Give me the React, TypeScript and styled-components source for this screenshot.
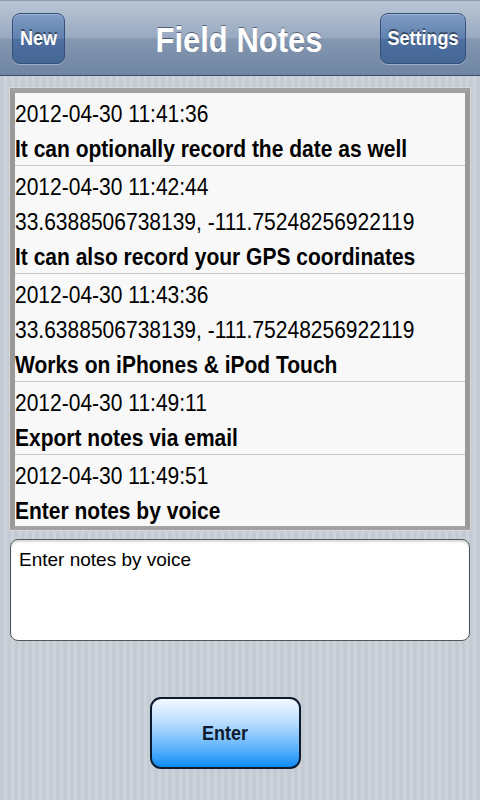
import styled, { createGlobalStyle } from 'styled-components';

const GlobalStyle = createGlobalStyle`
  html, body {
    margin: 0;
    padding: 0;
  }
  body {
    font-family: 'Liberation Sans', Arial, sans-serif;
  }
`;

interface Note {
  id: number;
  date: string;
  gps?: string;
  text: string;
}

const NOTES: Note[] = [
  { id: 1, date: '2012-04-30 11:41:36', text: 'It can optionally record the date as well' },
  {
    id: 2,
    date: '2012-04-30 11:42:44',
    gps: '33.6388506738139, -111.75248256922119',
    text: 'It can also record your GPS coordinates',
  },
  {
    id: 3,
    date: '2012-04-30 11:43:36',
    gps: '33.6388506738139, -111.75248256922119',
    text: 'Works on iPhones & iPod Touch',
  },
  { id: 4, date: '2012-04-30 11:49:11', text: 'Export notes via email' },
  { id: 5, date: '2012-04-30 11:49:51', text: 'Enter notes by voice' },
];

// the screenshot is stretched a little taller than wide
const STRETCH = 'scaleY(1.11)';

const Screen = styled.div`
  width: 480px;
  height: 800px;
  display: flex;
  flex-direction: column;
  overflow: hidden;
  background: repeating-linear-gradient(
    90deg,
    #c4cbd3 0px,
    #c4cbd3 4px,
    #ccd3da 4px,
    #ccd3da 7px
  );
`;

const NavBar = styled.header`
  height: 76px;
  flex-shrink: 0;
  box-sizing: border-box;
  display: grid;
  grid-template-columns: 1fr auto 1fr;
  align-items: center;
  padding: 0 14px 0 12px;
  border-top: 1px solid #8d9cb0;
  border-bottom: 1px solid #3e5069;
  background: linear-gradient(180deg, #bac6d5 0%, #98a9c0 50%, #8598b2 51%, #6f85a3 100%);
`;

const NavButton = styled.button<{ $width: number; $right?: boolean }>`
  width: ${p => p.$width}px;
  height: 51px;
  justify-self: ${p => (p.$right ? 'end' : 'start')};
  padding: 0;
  border: 1px solid #34507a;
  border-radius: 8px;
  background: linear-gradient(180deg, #7f9cc3 0%, #5f80ae 50%, #4e6f9f 51%, #456897 100%);
  box-shadow: inset 0 1px 0 rgba(255, 255, 255, 0.25), 0 1px 0 rgba(255, 255, 255, 0.3);
  color: #fff;
  font-family: 'Liberation Sans', Arial, sans-serif;
  font-weight: bold;
  font-size: 18px;
  text-shadow: 0 -1px 0 rgba(0, 0, 0, 0.45);
  span {
    display: inline-block;
    transform: ${STRETCH};
  }
`;

const Title = styled.h1`
  margin: 5px 0 0 0;
  color: #fff;
  font-size: 31px;
  font-weight: bold;
  text-shadow: 0 -1px 0 rgba(30, 45, 70, 0.6);
  transform: ${STRETCH};
`;

const Body = styled.main`
  flex: 1;
  display: flex;
  flex-direction: column;
  padding: 12px 10px 0 10px;
`;

const List = styled.div`
  height: 442px;
  flex-shrink: 0;
  box-sizing: border-box;
  border: 5px solid #a2a2a2;
  border-left-color: #9a9a9a;
  border-right-color: #9a9a9a;
  border-bottom-width: 4px;
  box-shadow: 0 0 0 1px #d8d8d8;
  background: #f7f7f7;
  overflow: hidden;
`;

const Row = styled.div`
  padding-top: 2px;
  border-bottom: 1px solid #c9c9c9;
  background: #f8f8f8;
  &:last-child {
    border-bottom: none;
  }
`;

const Line = styled.div<{ $bold?: boolean }>`
  height: 35px;
  line-height: 37px;
  color: #000;
  font-size: 21px;
  font-weight: ${p => (p.$bold ? 'bold' : 'normal')};
  white-space: nowrap;
  transform: ${STRETCH};
  transform-origin: left center;
`;

const NoteInput = styled.textarea`
  margin-top: 9px;
  height: 102px;
  flex-shrink: 0;
  box-sizing: border-box;
  padding: 9px 8px 7px;
  border: 1px solid #555;
  border-radius: 8px;
  background: #fff;
  box-shadow: inset 0 2px 2px rgba(0, 0, 0, 0.15);
  color: #000;
  font-family: 'Liberation Sans', Arial, sans-serif;
  font-size: 19px;
  resize: none;
  outline: none;
`;

const Footer = styled.div`
  display: flex;
  justify-content: center;
  padding: 56px 30px 0 0;
`;

const EnterButton = styled.button`
  width: 151px;
  height: 72px;
  border: 2px solid #0b1a2e;
  border-radius: 11px;
  background: linear-gradient(180deg, #f2f8ff 0%, #b9ddff 35%, #58b0fb 75%, #0f8cf7 100%);
  color: #0f1a2e;
  font-family: 'Liberation Sans', Arial, sans-serif;
  font-size: 18px;
  font-weight: bold;
  span {
    display: inline-block;
    transform: ${STRETCH};
  }
`;

export default function App() {
  return (
    <Screen>
      <GlobalStyle />
      <NavBar>
        <NavButton $width={53}>
          <span>New</span>
        </NavButton>
        <Title>Field Notes</Title>
        <NavButton $width={86} $right>
          <span>Settings</span>
        </NavButton>
      </NavBar>
      <Body>
        <List>
          {NOTES.map(note => (
            <Row key={note.id}>
              <Line>{note.date}</Line>
              {note.gps && <Line>{note.gps}</Line>}
              <Line $bold>{note.text}</Line>
            </Row>
          ))}
        </List>
        <NoteInput defaultValue='Enter notes by voice' />
        <Footer>
          <EnterButton>
            <span>Enter</span>
          </EnterButton>
        </Footer>
      </Body>
    </Screen>
  );
}
